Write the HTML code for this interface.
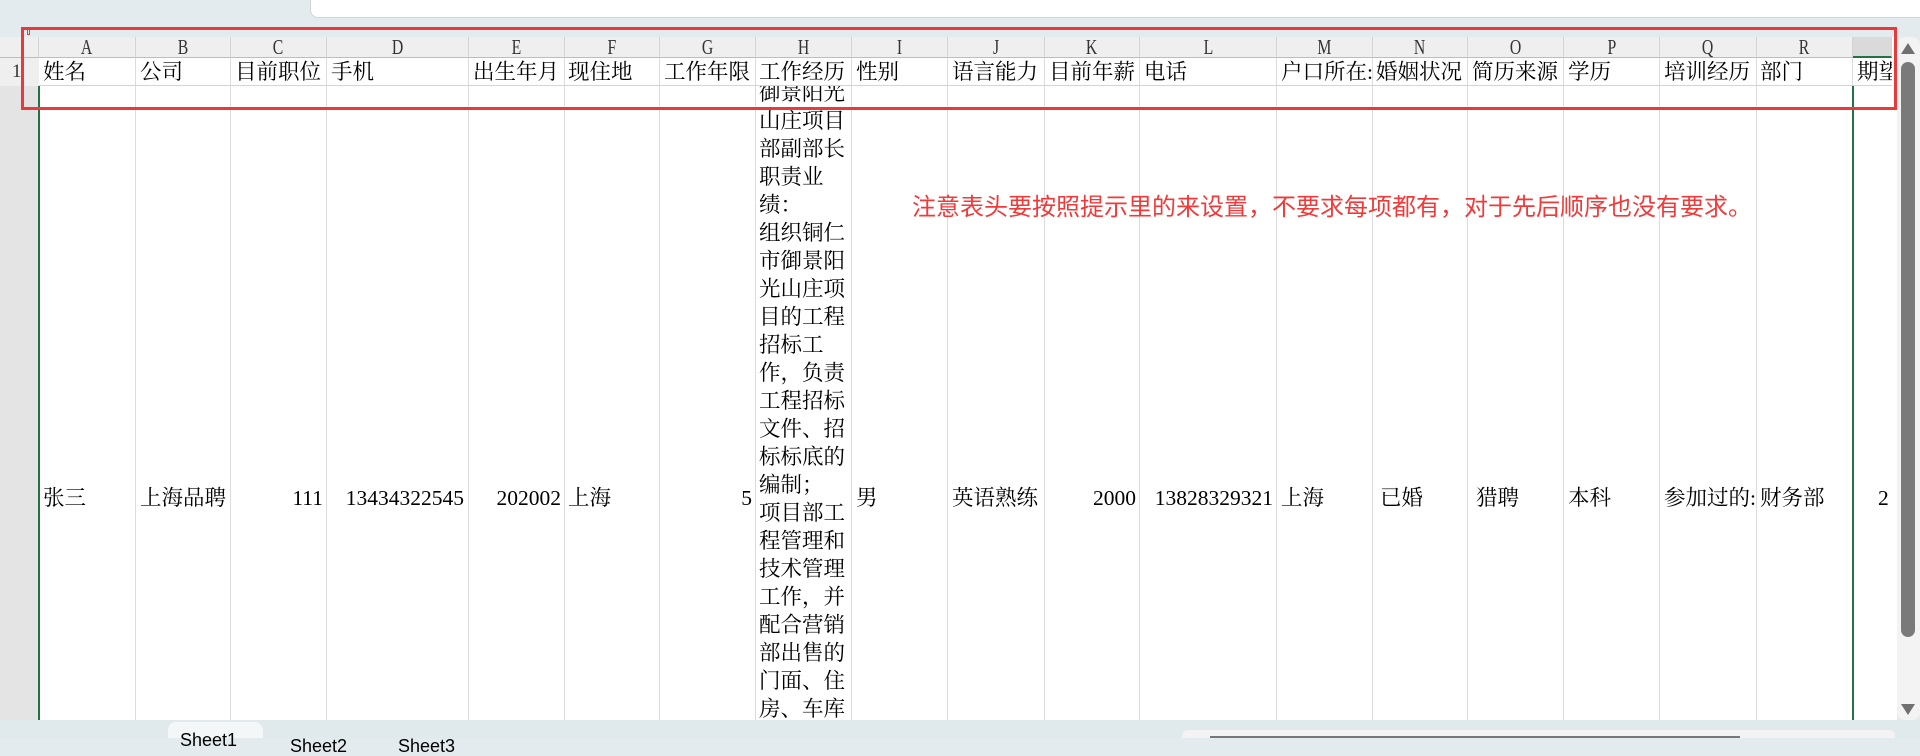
<!DOCTYPE html>
<html><head><meta charset="utf-8"><style>
*{margin:0;padding:0;box-sizing:border-box}
body{width:1920px;height:738px;overflow:hidden;background:#e4ebee;position:relative;font-family:"Liberation Serif","Noto Serif CJK SC",serif;color:#000}
.a{position:absolute}
.hc{position:absolute;top:37px;height:21px;background:#efefef;border-right:1px solid #d4d4d4;border-bottom:1px solid #bdbdbd;font-size:21px;line-height:21px;text-align:center;color:#333}
.hc span{display:inline-block;transform:scaleX(0.75)}
.vl{position:absolute;top:58px;height:662px;width:1px;background:#dcdcdc}
.t{position:absolute;font-size:21.5px;line-height:28px;white-space:nowrap;font-family:"Liberation Serif","Noto Serif CJK SC",serif}
.r1{top:58px}
.d{top:484px}
.num{text-align:right}
</style></head><body>
<div class="a" style="left:310px;top:0;width:1610px;height:18px;background:#fff;border-bottom-left-radius:8px;border-left:1px solid #d0d6d8;border-bottom:1px solid #d0d6d8"></div>
<div class="a" style="left:0;top:37px;width:1897px;height:683px;background:#fff"></div>
<div class="a" style="left:0;top:37px;width:39px;height:21px;background:#efefef;border-bottom:1px solid #bdbdbd;border-right:1px solid #d4d4d4"></div>
<div class="a" style="left:0;top:58px;width:39px;height:28px;background:#efefef;font-size:19px;line-height:28px;padding-left:12px;color:#333">1</div>
<div class="a" style="left:0;top:86px;width:39px;height:634px;background:#e4e4e4"></div>
<div class="a" style="left:27px;top:29px;width:3px;height:6px;border:1px solid #e83a3a"></div>
<div class="hc" style="left:39px;width:97px"><span>A</span></div>
<div class="hc" style="left:136px;width:95px"><span>B</span></div>
<div class="hc" style="left:231px;width:96px"><span>C</span></div>
<div class="hc" style="left:327px;width:142px"><span>D</span></div>
<div class="hc" style="left:469px;width:96px"><span>E</span></div>
<div class="hc" style="left:565px;width:95px"><span>F</span></div>
<div class="hc" style="left:660px;width:96px"><span>G</span></div>
<div class="hc" style="left:756px;width:96px"><span>H</span></div>
<div class="hc" style="left:852px;width:96px"><span>I</span></div>
<div class="hc" style="left:948px;width:97px"><span>J</span></div>
<div class="hc" style="left:1045px;width:95px"><span>K</span></div>
<div class="hc" style="left:1140px;width:137px"><span>L</span></div>
<div class="hc" style="left:1277px;width:96px"><span>M</span></div>
<div class="hc" style="left:1373px;width:95px"><span>N</span></div>
<div class="hc" style="left:1468px;width:96px"><span>O</span></div>
<div class="hc" style="left:1564px;width:96px"><span>P</span></div>
<div class="hc" style="left:1660px;width:97px"><span>Q</span></div>
<div class="hc" style="left:1757px;width:96px"><span>R</span></div>
<div class="hc" style="left:1853px;width:39px;background:#dadada;border-bottom:2px solid #217346"></div>
<div class="vl" style="left:135px"></div><div class="vl" style="left:230px"></div><div class="vl" style="left:326px"></div>
<div class="vl" style="left:468px"></div><div class="vl" style="left:564px"></div><div class="vl" style="left:659px"></div>
<div class="vl" style="left:755px"></div><div class="vl" style="left:851px"></div><div class="vl" style="left:947px"></div>
<div class="vl" style="left:1044px"></div><div class="vl" style="left:1139px"></div><div class="vl" style="left:1276px"></div>
<div class="vl" style="left:1372px"></div><div class="vl" style="left:1467px"></div><div class="vl" style="left:1563px"></div>
<div class="vl" style="left:1659px"></div><div class="vl" style="left:1756px"></div><div class="vl" style="left:1852px"></div>
<div class="a" style="left:39px;top:85px;width:1853px;height:1px;background:#d4d4d4"></div>
<div class="a" style="left:38px;top:86px;width:2px;height:634px;background:#217346"></div>
<div class="a" style="left:1852px;top:86px;width:2px;height:634px;background:#217346"></div>
<div class="t r1" style="left:43px">姓名</div>
<div class="t r1" style="left:140px">公司</div>
<div class="t r1" style="left:235px">目前职位</div>
<div class="t r1" style="left:331px">手机</div>
<div class="t r1" style="left:473px">出生年月</div>
<div class="t r1" style="left:568px">现住地</div>
<div class="t r1" style="left:664px">工作年限</div>
<div class="t r1" style="left:759px">工作经历</div>
<div class="t r1" style="left:856px">性别</div>
<div class="t r1" style="left:952px">语言能力</div>
<div class="t r1" style="left:1049px">目前年薪</div>
<div class="t r1" style="left:1144px">电话</div>
<div class="t r1" style="left:1281px;width:92px;overflow:hidden">户口所在:</div>
<div class="t r1" style="left:1376px">婚姻状况</div>
<div class="t r1" style="left:1472px">简历来源</div>
<div class="t r1" style="left:1568px">学历</div>
<div class="t r1" style="left:1664px">培训经历</div>
<div class="t r1" style="left:1760px">部门</div>
<div class="t r1" style="left:1857px;width:35px;overflow:hidden">期望</div>
<div class="a" style="left:756px;top:86px;width:96px;height:634px;overflow:hidden">
<div class="t" style="left:3px;top:-7px;white-space:normal;width:92px">御景阳光<br>山庄项目<br>部副部长<br>职责业<br>绩：<br>组织铜仁<br>市御景阳<br>光山庄项<br>目的工程<br>招标工<br>作，负责<br>工程招标<br>文件、招<br>标标底的<br>编制；<br>项目部工<br>程管理和<br>技术管理<br>工作，并<br>配合营销<br>部出售的<br>门面、住<br>房、车库</div>
</div>
<div class="t d" style="left:43px">张三</div>
<div class="t d" style="left:140px">上海品聘</div>
<div class="t d num" style="left:231px;width:92px">111</div>
<div class="t d num" style="left:327px;width:137px">13434322545</div>
<div class="t d num" style="left:469px;width:92px">202002</div>
<div class="t d" style="left:568px">上海</div>
<div class="t d num" style="left:660px;width:92px">5</div>
<div class="t d" style="left:856px">男</div>
<div class="t d" style="left:952px">英语熟练</div>
<div class="t d num" style="left:1045px;width:91px">2000</div>
<div class="t d num" style="left:1140px;width:133px">13828329321</div>
<div class="t d" style="left:1281px">上海</div>
<div class="t d" style="left:1380px">已婚</div>
<div class="t d" style="left:1476px">猎聘</div>
<div class="t d" style="left:1568px">本科</div>
<div class="t d" style="left:1664px;width:93px;overflow:hidden">参加过的:</div>
<div class="t d" style="left:1760px">财务部</div>
<div class="t d" style="left:1878px">2</div>
<div class="a" style="left:912px;top:192px;font-size:24px;line-height:32px;color:#f03a3a;white-space:nowrap;font-family:'Liberation Sans','Noto Sans CJK SC',sans-serif">注意表头要按照提示里的来设置，不要求每项都有，对于先后顺序也没有要求。</div>
<div class="a" style="left:21px;top:27px;width:1876px;height:83px;border:3px solid #e83a3a"></div>
<div class="a" style="left:1897px;top:37px;width:23px;height:683px;background:#f3f3f3;border-radius:8px"></div>
<div class="a" style="left:1901px;top:43px;width:0;height:0;border-left:7px solid transparent;border-right:7px solid transparent;border-bottom:11px solid #707070"></div>
<div class="a" style="left:1901px;top:62px;width:14px;height:575px;background:#7a7a7a;border-radius:7px"></div>
<div class="a" style="left:1901px;top:704px;width:0;height:0;border-left:7px solid transparent;border-right:7px solid transparent;border-top:11px solid #707070"></div>
<div class="a" style="left:0;top:720px;width:1920px;height:18px;background:#e0e9eb"></div>
<div class="a" style="left:168px;top:722px;width:95px;height:16px;background:#f4f7f7;border-radius:8px 8px 0 0"></div>
<div class="a" style="left:180px;top:730px;font-size:18px;line-height:20px;font-family:'Liberation Sans',sans-serif">Sheet1</div>
<div class="a" style="left:290px;top:736px;font-size:18px;line-height:20px;font-family:'Liberation Sans',sans-serif">Sheet2</div>
<div class="a" style="left:398px;top:736px;font-size:18px;line-height:20px;font-family:'Liberation Sans',sans-serif">Sheet3</div>
<div class="a" style="left:1182px;top:730px;width:713px;height:8px;background:#f3f3f3;border-radius:6px 6px 0 0"></div>
<div class="a" style="left:1210px;top:736px;width:530px;height:2px;background:#777"></div>
</body></html>
